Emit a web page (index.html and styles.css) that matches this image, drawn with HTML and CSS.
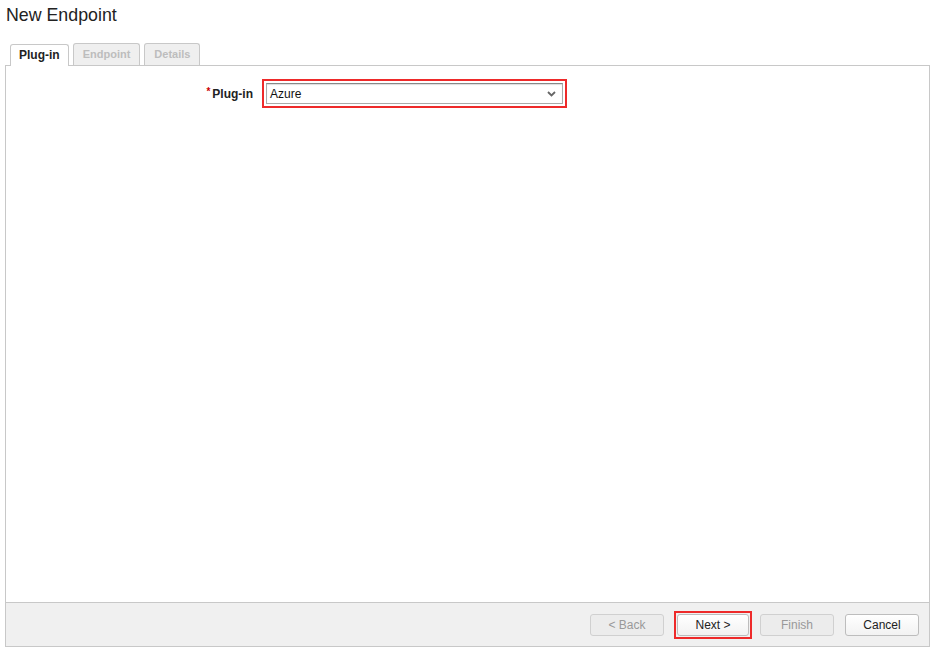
FILE: index.html
```html
<!DOCTYPE html>
<html lang="en">
<head>
    <title>New Endpoint</title>
    <meta charset="UTF-8">
    <link rel="stylesheet" href="styles.css">
</head>
<body>
<h1>New Endpoint</h1>

<!-- Tabs -->
<div class="tabs">
    <div class="tab active">Plug-in</div>
    <div class="tab disabled">Endpoint</div>
    <div class="tab disabled">Details</div>
</div>

<div class="panel">
    <div class="content">
        <div class="form-row">
            <label class="label"><span class="req">*</span>Plug-in</label>
            <div class="highlight">
                <div class="select">
                    <span>Azure</span>
                    <svg width="9" height="6" viewBox="0 0 9 6"><path d="M1 1 L4.5 4.5 L8 1" fill="none" stroke="#666" stroke-width="1.8"/></svg>
                </div>
            </div>
        </div>
    </div>
    <div class="footer">
        <button class="btn back" disabled>&lt; Back</button>
        <div class="highlight btn-hl"><button class="btn">Next &gt;</button></div>
        <button class="btn finish" disabled>Finish</button>
        <button class="btn">Cancel</button>
    </div>
</div>
</body>
</html>
```

FILE: styles.css
```css
html, body { margin: 0; padding: 0; }
body { font-family: "Liberation Sans", Arial, sans-serif; color: #222; background: #fff; width: 935px; height: 648px; overflow: hidden; }
h1 { font-size: 17.8px; font-weight: normal; margin: 0; padding: 5px 0 0 6px; height: 39px; box-sizing: border-box; color: #222; }
.tabs { display: flex; gap: 4px; padding-left: 10px; height: 22px; margin-top: 4px; }
.tab { font-size: 12px; font-weight: bold; padding: 0 8px; border: 1px solid #c8c8c8; border-bottom: none; border-radius: 3px 3px 0 0; line-height: 21px; background: #efefef; color: #bbb; }
.tab.disabled { font-size: 11px; padding: 0 9px; color: #bdbdbd; }
.tab.active { background: #fff; color: #222; position: relative; top: 1px; height: 21px; }
.panel { margin-left: 5px; width: 925px; height: 582px; border: 1px solid #c8c8c8; border-bottom: none; box-sizing: border-box; display: flex; flex-direction: column; }
.content { flex: 1; }
.form-row { display: flex; align-items: center; margin-top: 13px; }
.label { width: 256px; text-align: right; font-size: 12px; font-weight: bold; padding-right: 9px; box-sizing: border-box; }
.req { color: #c00; font-size: 10px; vertical-align: 3px; margin-right: 2px; }
.highlight { border: 2px solid #ee2a2a; padding: 2px; }
.select { width: 297px; height: 21px; border: 1px solid #aaa; border-top-color: #888; box-sizing: border-box; display: flex; align-items: center; justify-content: space-between; padding: 0 6px 0 3px; font-size: 12px; color: #111; box-shadow: inset 0 1px 1px #ddd; }
.footer { height: 43px; background: #f0f0f0; border-top: 1px solid #c8c8c8; border-bottom: 1px solid #c8c8c8; display: flex; align-items: center; justify-content: flex-end; padding-right: 10px; }
.btn { width: 74px; height: 22px; font-family: "Liberation Sans", Arial, sans-serif; font-size: 12px; color: #222; background: linear-gradient(#fff, #f2f2f2); border: 1px solid #bdbdbd; border-radius: 3px; padding: 0; margin: 0; }
.btn:disabled { color: #999; background: #ececec; border-color: #d0d0d0; }
.back { margin-right: 10px; }
.btn-hl { padding: 1px; margin-right: 8px; }
.btn-hl .btn { width: 72px; }
.finish { margin-right: 11px; }
```
